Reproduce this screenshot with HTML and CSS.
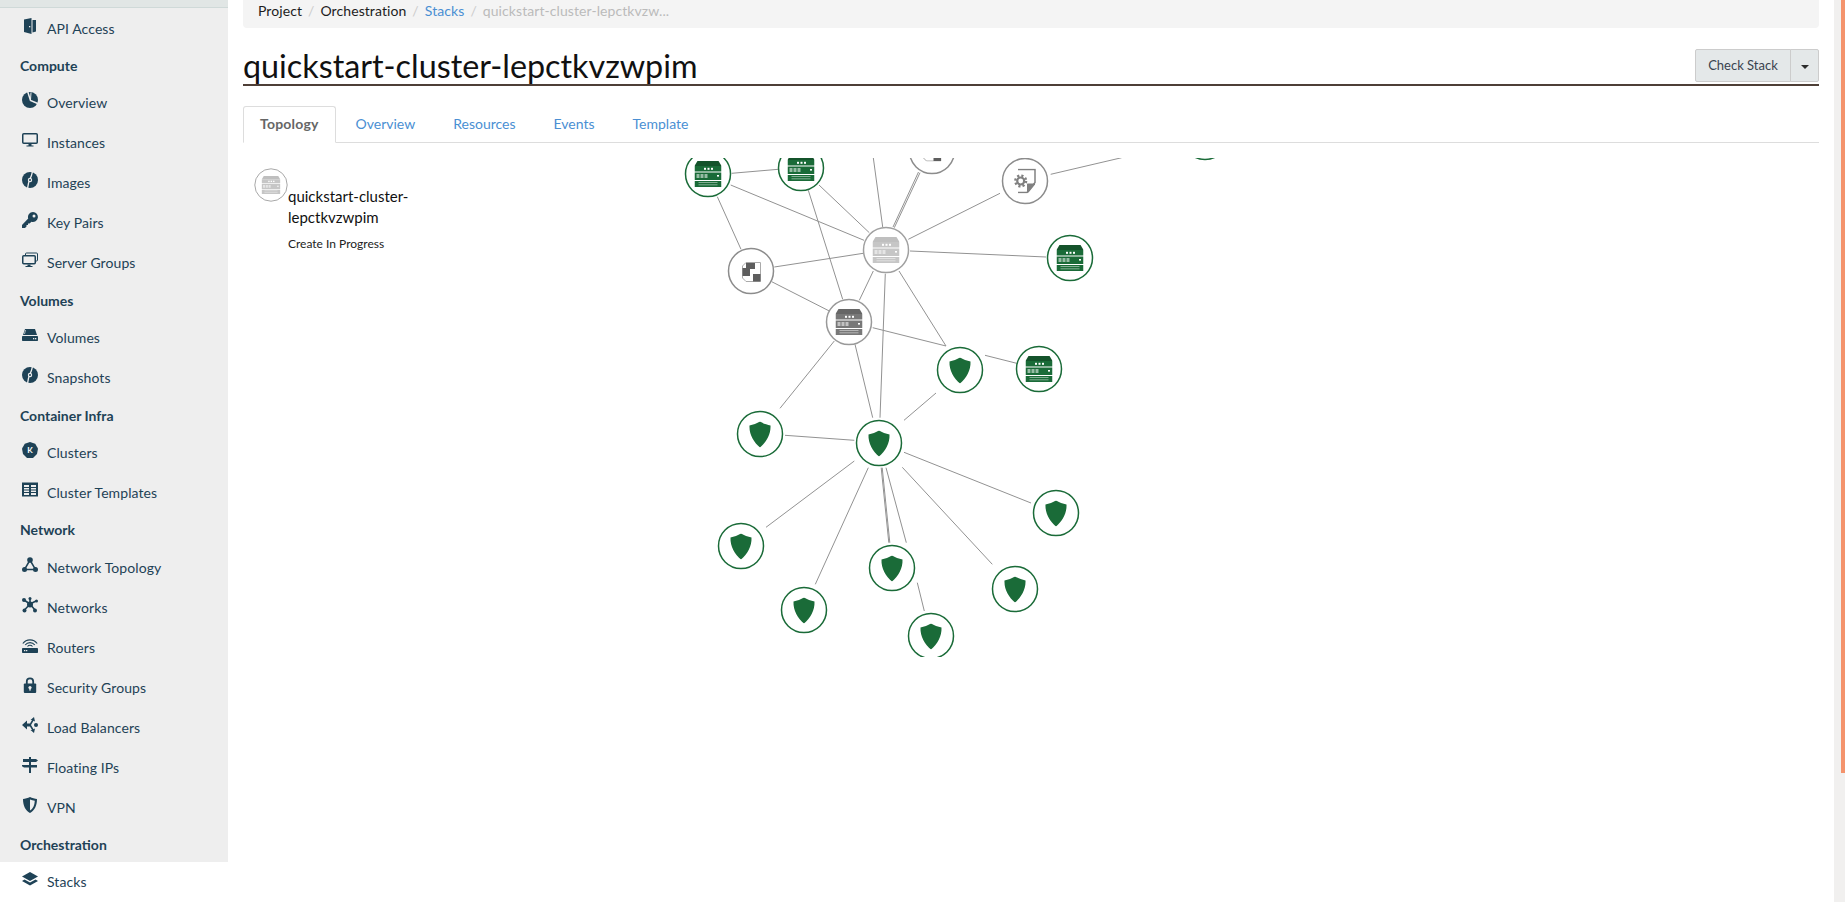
FILE: index.html

```html
<!DOCTYPE html>
<html lang="en">
<head>
    <meta charset="UTF-8">
    <meta name="viewport" content="width=device-width, initial-scale=1.0">
    <title>Stack Details</title>
    <link rel="stylesheet" href="styles.css">
</head>
<body>
<svg class="icon-defs" width="0" height="0">
    <symbol id="node-server" viewBox="0 0 27 26">
        <path d="M3 0H24L27 5H0Z" fill="currentColor"/>
        <path class="server-top" d="M3 0H24L27 5H0Z" fill="#000"/>
        <rect y="5" width="27" height="5.500" fill="currentColor"/>
        <rect y="11.500" width="27" height="7.500" fill="currentColor"/>
        <rect y="20" width="27" height="6" fill="currentColor"/>
        <rect x="9.500" y="6.800" width="2" height="2" fill="#fff"/>
        <rect x="13" y="6.800" width="2" height="2" fill="#fff"/>
        <rect x="16.500" y="6.800" width="2" height="2" fill="#fff"/>
        <rect x="22.500" y="14" width="2" height="1.600" fill="#fff"/>
        <path d="M2 13H5V17H2ZM6 13H9V17H6ZM10 13H13V17H10Z" fill="#fff" opacity="0.55"/>
        <rect x="4" y="21" width="19" height="1" fill="#fff" opacity="0.45"/>
        <rect x="4" y="23.300" width="19" height="1" fill="#fff" opacity="0.45"/>
    </symbol>
    <symbol id="node-checker" viewBox="0 0 19 20">
        <path d="M4 .5H18.500V19.500H4L.5 16V4Z" fill="#fff" stroke="#aaa"/>
        <path d="M4 1H13V7H8V14H.5V6H4Z" fill="currentColor"/>
        <path d="M11 12H18.500V19.500H11Z" fill="currentColor"/>
    </symbol>
    <symbol id="node-doc" viewBox="0 0 22 25">
        <path d="M4 1H21V14L13 24H4" fill="none" stroke="currentColor" stroke-width="1.500"/>
        <path d="M21 15V16L14.500 24H13V15Z" fill="currentColor"/>
        <circle cx="6.700" cy="12.500" r="7" fill="#fff"/>
        <circle cx="6.700" cy="12.500" r="5.400" fill="none" stroke="currentColor" stroke-width="2.400" stroke-dasharray="2.150 2.090"/>
        <circle cx="6.700" cy="12.500" r="3.500" fill="none" stroke="currentColor" stroke-width="2.200"/>
    </symbol>
    <symbol id="node-shield" viewBox="0 0 22 26">
        <path d="M11 0C14 2 18 3 21.500 4C22 13 17 21 11 26C5 21 0 13 .5 4C4 3 8 2 11 0Z" fill="currentColor"/>
    </symbol>

    <symbol id="i-door" viewBox="0 0 16 16"><path d="M2 1.500L9.500 0V16L2 14ZM10.500 2H14V13.500L10.500 14.500Z" fill="currentColor"/><rect x="7" y="8" width="1.300" height="1.300" fill="#eee"/></symbol>
    <symbol id="i-pie" viewBox="0 0 16 16"><circle cx="8" cy="8" r="8" fill="currentColor"/><path d="M5.500 -1L8.500 8.500L17 12" fill="none" stroke="#eee" stroke-width="1.500"/><path d="M9 0.500L8.500 8" fill="none" stroke="#eee"/></symbol>
    <symbol id="i-monitor" viewBox="0 0 16 16"><rect x=".75" y="1.750" width="14.500" height="9.500" rx="1" fill="none" stroke="currentColor" stroke-width="1.500"/><path d="M6.500 12H9.500V13.500H11.500V14.500H4.500V13.500H6.500Z" fill="currentColor"/></symbol>
    <symbol id="i-disc" viewBox="0 0 16 16"><circle cx="8" cy="8" r="8" fill="currentColor"/><path d="M10.500 -1C10 3 9 5 8 7C6.500 10 6 13 5.500 17" fill="none" stroke="#eee" stroke-width="1.300"/><circle cx="8" cy="8" r="2.200" fill="#eee"/><circle cx="8" cy="8" r="1" fill="currentColor"/></symbol>
    <symbol id="i-key" viewBox="0 0 16 16"><path d="M11 0A5 5 0 1 1 9.500 9.800L7.500 11.500H6V13H4.500V14.500L3 16H0V13L6.200 6.500A5 5 0 0 1 11 0Z" fill="currentColor"/><circle cx="12" cy="4" r="1.500" fill="#eee"/></symbol>
    <symbol id="i-monitors" viewBox="0 0 16 16"><rect x="3.500" y="1" width="12" height="8" rx="1" fill="none" stroke="currentColor"/><rect x=".75" y="3.750" width="12.500" height="8" rx="1" fill="#eee" stroke="currentColor" stroke-width="1.500"/><path d="M5.500 12.500H8.500V14H10.500V15H3.500V14H5.500Z" fill="currentColor"/></symbol>
    <symbol id="i-hdd" viewBox="0 0 16 16"><path d="M3 2H13L15 8H1Z" fill="currentColor"/><path d="M3.500 3L2.500 7" stroke="#eee" stroke-width=".7"/><rect y="9" width="16" height="5" rx=".7" fill="currentColor"/><rect x="11" y="11" width="1.300" height="1.300" fill="#eee"/><rect x="13" y="11" width="1.300" height="1.300" fill="#eee"/></symbol>
    <symbol id="i-k8s" viewBox="0 0 16 16"><path d="M8 0L13.200 1.800L16 6.500L15 12L11 16H5L1 12L0 6.500L2.800 1.800Z" fill="currentColor"/></symbol>
    <symbol id="i-book" viewBox="0 0 16 16"><rect y="0.500" width="16" height="14" fill="currentColor"/><path d="M2 3H7V13H2ZM9 3H14V13H9Z" fill="#eee"/><path d="M2 5.500H7M9 5.500H14M2 8H7M9 8H14M2 10.500H7M9 10.500H14" stroke="currentColor"/></symbol>
    <symbol id="i-topo" viewBox="0 0 16 16"><path d="M8 3L2.500 12.500H13.500Z" fill="none" stroke="currentColor" stroke-width="1.500"/><circle cx="8" cy="3" r="2.800" fill="currentColor"/><circle cx="2.500" cy="12.500" r="2.500" fill="currentColor"/><circle cx="13.500" cy="12.500" r="2.500" fill="currentColor"/></symbol>
    <symbol id="i-net" viewBox="0 0 16 16"><path d="M8 7L8 1M8 7L2 3M8 7L14 4M8 7L2.500 13M8 7L13 13" stroke="currentColor" stroke-width="1.600"/><circle cx="8" cy="7.500" r="3" fill="currentColor"/><circle cx="8" cy="1.500" r="1.500" fill="currentColor"/><circle cx="2" cy="3" r="2" fill="currentColor"/><circle cx="14.500" cy="4" r="1.500" fill="currentColor"/><circle cx="2.500" cy="13.500" r="2" fill="currentColor"/><circle cx="13" cy="13.500" r="2" fill="currentColor"/></symbol>
    <symbol id="i-router" viewBox="0 0 16 16"><path d="M.8 6.500A9 9 0 0 1 15.200 6.500M3.200 8A6 6 0 0 1 12.800 8M5.500 9.500A3.200 3.200 0 0 1 10.500 9.500" fill="none" stroke="currentColor" stroke-width="1.100"/><rect y="11" width="16" height="5" rx=".8" fill="currentColor"/><rect x="2" y="13" width="1.300" height="1.200" fill="#eee"/><rect x="4" y="13" width="1.300" height="1.200" fill="#eee"/></symbol>
    <symbol id="i-lock" viewBox="0 0 16 16"><path d="M4.800 7V4.500A3.200 3.200 0 0 1 11.200 4.500V7" fill="none" stroke="currentColor" stroke-width="1.800"/><rect x="1.800" y="6.500" width="12.400" height="9.500" rx="1" fill="currentColor"/><circle cx="8" cy="10.500" r="1.600" fill="#eee"/><rect x="7.300" y="11" width="1.400" height="2.600" fill="#eee"/></symbol>
    <symbol id="i-lb" viewBox="0 0 16 16"><path d="M0 8L5 3.500V6.500H8L10 3H8.500L12 0L13 4.500L11.500 3.800L9 8L11.500 12.200L13 11.500L12 16L8.500 13H10L8 9.500H5V12.500Z" fill="currentColor"/><circle cx="14" cy="8" r="2" fill="currentColor"/></symbol>
    <symbol id="i-sign" viewBox="0 0 16 16"><rect x="7" y="0" width="2" height="16" fill="currentColor"/><path d="M1 2H14L16 3.500L14 5H1ZM0 8H15V10.500H2L0 9.200Z" fill="currentColor"/></symbol>
    <symbol id="i-vpn" viewBox="0 0 16 16"><path d="M8 0C10 1 13 1.800 15 2C15 9 12.500 13.500 8 16C3.500 13.500 1 9 1 2C3 1.800 6 1 8 0Z" fill="currentColor"/><path d="M8 2.500C9.500 3.200 11.300 3.600 12.800 3.800C12.600 8.500 11 11.800 8 13.500Z" fill="#eee"/></symbol>
    <symbol id="i-layers" viewBox="0 0 16 16"><path d="M8 1L16 5.500L8 10L0 5.500Z" fill="currentColor"/><path d="M2.500 8.500L8 11.500L13.500 8.500L16 10L8 14.500L0 10Z" fill="currentColor"/></symbol>
</svg>

<div class="app">
    <nav class="sidebar">
        <div class="sidebar-top"></div>
        <a class="nav-item"><svg class="nav-icon"><use href="#i-door"/></svg>API Access</a>
        <div class="nav-head">Compute</div>
        <a class="nav-item"><svg class="nav-icon"><use href="#i-pie"/></svg>Overview</a>
        <a class="nav-item"><svg class="nav-icon"><use href="#i-monitor"/></svg>Instances</a>
        <a class="nav-item"><svg class="nav-icon"><use href="#i-disc"/></svg>Images</a>
        <a class="nav-item"><svg class="nav-icon"><use href="#i-key"/></svg>Key Pairs</a>
        <a class="nav-item"><svg class="nav-icon"><use href="#i-monitors"/></svg>Server Groups</a>
        <div class="nav-head">Volumes</div>
        <a class="nav-item"><svg class="nav-icon"><use href="#i-hdd"/></svg>Volumes</a>
        <a class="nav-item"><svg class="nav-icon"><use href="#i-disc"/></svg>Snapshots</a>
        <div class="nav-head">Container Infra</div>
        <a class="nav-item"><svg class="nav-icon" viewBox="0 0 16 16"><use href="#i-k8s"/><text x="8" y="10.800" class="k-label">K</text></svg>Clusters</a>
        <a class="nav-item"><svg class="nav-icon"><use href="#i-book"/></svg>Cluster Templates</a>
        <div class="nav-head">Network</div>
        <a class="nav-item"><svg class="nav-icon"><use href="#i-topo"/></svg>Network Topology</a>
        <a class="nav-item"><svg class="nav-icon"><use href="#i-net"/></svg>Networks</a>
        <a class="nav-item"><svg class="nav-icon"><use href="#i-router"/></svg>Routers</a>
        <a class="nav-item"><svg class="nav-icon"><use href="#i-lock"/></svg>Security Groups</a>
        <a class="nav-item"><svg class="nav-icon"><use href="#i-lb"/></svg>Load Balancers</a>
        <a class="nav-item"><svg class="nav-icon"><use href="#i-sign"/></svg>Floating IPs</a>
        <a class="nav-item"><svg class="nav-icon"><use href="#i-vpn"/></svg>VPN</a>
        <div class="nav-head">Orchestration</div>
        <a class="nav-item active"><svg class="nav-icon"><use href="#i-layers"/></svg>Stacks</a>
    </nav>

    <main class="content">
        <ol class="breadcrumb">
            <li>Project</li>
            <li>Orchestration</li>
            <li><a>Stacks</a></li>
            <li class="current">quickstart-cluster-lepctkvzw...</li>
        </ol>

        <div class="page-header">
            <h1>quickstart-cluster-lepctkvzwpim</h1>
            <div class="btn-group">
                <button class="btn">Check Stack</button>
                <button class="btn btn-caret"><span class="caret"></span></button>
            </div>
        </div>

        <ul class="tabs">
            <li class="tab active">Topology</li>
            <li class="tab">Overview</li>
            <li class="tab">Resources</li>
            <li class="tab">Events</li>
            <li class="tab">Template</li>
        </ul>

        <section class="topology">
            <div class="stack-info">
                <svg class="stack-icon" viewBox="0 0 34 34">
                    <circle cx="17" cy="17" r="16.200" class="stack-ring"/>
                    <use href="#node-server" x="7.500" y="8" width="19" height="18" class="c-light"/>
                </svg>
                <div class="stack-name">quickstart-cluster-<br>lepctkvzwpim</div>
                <div class="stack-status">Create In Progress</div>
            </div>

            <svg class="graph" viewBox="243 157 1576 499">
                <g class="links">
                    <line x1="731.7" y1="172.3" x2="778.3" y2="168.3"/>
                    <line x1="730.7" y1="184" x2="864" y2="239.300"/>
                    <line x1="717.3" y1="195.7" x2="741" y2="248.300"/>
                    <line x1="819" y1="184" x2="869.300" y2="231.700"/>
                    <line x1="808.300" y1="189.300" x2="842.700" y2="298.300"/>
                    <line x1="873.300" y1="156.700" x2="882.700" y2="226"/>
                    <line x1="920" y1="171.700" x2="894.300" y2="226.700"/>
                    <line x1="918.500" y1="171" x2="893" y2="226"/>
                    <line x1="908.300" y1="238.300" x2="1000" y2="192.300"/>
                    <line x1="910" y1="250" x2="1046" y2="256"/>
                    <line x1="774.300" y1="266" x2="863.300" y2="252.300"/>
                    <line x1="771.700" y1="280.700" x2="829.300" y2="310"/>
                    <line x1="873.300" y1="270" x2="859.300" y2="299.300"/>
                    <line x1="885.300" y1="272.700" x2="880" y2="416.700"/>
                    <line x1="899" y1="270" x2="946" y2="345"/>
                    <line x1="872.700" y1="326.700" x2="946" y2="345"/>
                    <line x1="855" y1="343.300" x2="872.700" y2="416.700"/>
                    <line x1="834.300" y1="340" x2="780" y2="407.300"/>
                    <line x1="1050.700" y1="173.300" x2="1121.700" y2="156.700"/>
                    <line x1="985" y1="354.300" x2="1016.700" y2="362.300"/>
                    <line x1="904" y1="419.300" x2="936" y2="392"/>
                    <line x1="785" y1="434.300" x2="854.300" y2="439.300"/>
                    <line x1="904" y1="451.300" x2="1031" y2="502"/>
                    <line x1="854.300" y1="460" x2="766" y2="526.300"/>
                    <line x1="868.300" y1="466.700" x2="815.300" y2="583.300"/>
                    <line x1="881.200" y1="466.700" x2="888.800" y2="541.700"/>
                    <line x1="882.200" y1="466.700" x2="889.800" y2="541.700"/>
                    <line x1="886" y1="466.700" x2="906.300" y2="541.700"/>
                    <line x1="902.300" y1="466.300" x2="992.300" y2="563.300"/>
                    <line x1="917.300" y1="581.700" x2="924.300" y2="610"/>
                </g>

                <g class="node ok"><circle cx="708" cy="173" r="22.500"/><use href="#node-server" x="694.500" y="160" width="27" height="26"/></g>
                <g class="node ok"><circle cx="801" cy="167" r="22.500"/><use href="#node-server" x="787.500" y="154" width="27" height="26"/></g>
                <g class="node ok"><circle cx="1205" cy="136" r="22.500"/></g>
                <g class="node ok"><circle cx="1070" cy="257" r="22.500"/><use href="#node-server" x="1056.500" y="244" width="27" height="26"/></g>
                <g class="node ok"><circle cx="1039" cy="368" r="22.500"/><use href="#node-server" x="1025.500" y="355" width="27" height="26"/></g>

                <g class="node idle"><circle cx="932" cy="150" r="22.500"/><use href="#node-checker" x="922.500" y="140.500" width="19" height="20"/></g>
                <g class="node idle"><circle cx="751" cy="270" r="22.500"/><use href="#node-checker" x="742" y="261" width="19" height="20"/></g>
                <g class="node doc"><circle cx="1025" cy="180" r="22.500"/><use href="#node-doc" x="1014" y="167.500" width="22" height="25"/></g>
                <g class="node light"><circle cx="886" cy="249" r="22.500"/><use href="#node-server" x="872.500" y="236" width="27" height="26"/></g>
                <g class="node dark"><circle cx="849" cy="321" r="22.500"/><use href="#node-server" x="835.500" y="308" width="27" height="26"/></g>

                <g class="node ok"><circle cx="960" cy="369" r="22.500"/><use href="#node-shield" x="949" y="356.500" width="22" height="26"/></g>
                <g class="node ok"><circle cx="760" cy="433" r="22.500"/><use href="#node-shield" x="749" y="420.500" width="22" height="26"/></g>
                <g class="node ok"><circle cx="879" cy="442" r="22.500"/><use href="#node-shield" x="868" y="429.500" width="22" height="26"/></g>
                <g class="node ok"><circle cx="1056" cy="512" r="22.500"/><use href="#node-shield" x="1045" y="499.500" width="22" height="26"/></g>
                <g class="node ok"><circle cx="741" cy="545" r="22.500"/><use href="#node-shield" x="730" y="532.500" width="22" height="26"/></g>
                <g class="node ok"><circle cx="892" cy="567" r="22.500"/><use href="#node-shield" x="881" y="554.500" width="22" height="26"/></g>
                <g class="node ok"><circle cx="1015" cy="588" r="22.500"/><use href="#node-shield" x="1004" y="575.500" width="22" height="26"/></g>
                <g class="node ok"><circle cx="804" cy="609" r="22.500"/><use href="#node-shield" x="793" y="596.500" width="22" height="26"/></g>
                <g class="node ok"><circle cx="931" cy="635" r="22.500"/><use href="#node-shield" x="920" y="622.500" width="22" height="26"/></g>
            </svg>
        </section>
    </main>

    <div class="scrollbar"><div class="scrollbar-thumb"></div></div>
</div>
</body>
</html>
```

FILE: styles.css

```css
html, body {
    height: 100%;
    margin: 0;
    overflow: hidden;
}
body {
    font-family: Lato, "Liberation Sans", sans-serif;
    font-size: 14px;
    background-color: white;
    color: #1d1d1d;
}
.icon-defs {
    position: absolute;
}
.app {
    display: flex;
    height: 902px;
}

/* sidebar */
.sidebar {
    width: 228px;
    flex-shrink: 0;
    background: #eeeeee;
    color: #1e4256;
    height: 902px;
}
.sidebar-top {
    height: 7px;
    background: #e1e6e5;
    border-bottom: 1px solid #cfd9d8;
}
.nav-item {
    display: flex;
    align-items: center;
    height: 40px;
    padding-left: 22px;
    letter-spacing: 0.08px;
}
.nav-icon {
    width: 16px;
    height: 16px;
    margin-right: 9px;
    margin-top: -5px;
    flex-shrink: 0;
}
.nav-head {
    height: 34.800px;
    line-height: 36px;
    padding-left: 20px;
    font-weight: bold;
}
.nav-item.active {
    background: white;
    border-bottom: 1px solid #e8e8e8;
}
.k-label {
    font-family: Lato, sans-serif;
    font-size: 8px;
    font-weight: bold;
    fill: white;
    text-anchor: middle;
}

/* main column */
.content {
    flex: 1;
    padding: 0 15px;
    min-width: 0;
}
.breadcrumb {
    display: flex;
    list-style: none;
    margin: 0;
    padding: 0 15px;
    height: 28px;
    line-height: 22px;
    background: #f4f4f4;
    border-radius: 0 0 4px 4px;
    letter-spacing: 0.08px;
}
.breadcrumb li + li::before {
    content: "/";
    color: #ccc;
    padding: 0 6px;
}
.breadcrumb a {
    color: #4a8fd3;
}
.breadcrumb .current {
    color: #bbb;
}

.page-header {
    display: flex;
    justify-content: space-between;
    align-items: flex-start;
    height: 56px;
    border-bottom: 2px solid #4e3f37;
}
.page-header h1 {
    margin: 0;
    font-size: 32.300px;
    font-weight: normal;
    line-height: 40px;
    padding-top: 18px;
    color: #111;
}
.btn-group {
    display: flex;
    margin-top: 21px;
}
.btn {
    font-family: inherit;
    font-size: 13px;
    color: #39434f;
    height: 33px;
    width: 96px;
    padding: 0 0 2px;
    background: #e4e8e9;
    border: 1px solid #ccc;
    border-radius: 2px 0 0 2px;
}
.btn-caret {
    width: 29px;
    margin-left: -1px;
    padding: 0;
    border-radius: 0 2px 2px 0;
}
.caret {
    display: inline-block;
    border-top: 4px solid #2c2c2c;
    border-left: 4px solid transparent;
    border-right: 4px solid transparent;
    vertical-align: middle;
}

.tabs {
    display: flex;
    list-style: none;
    margin: 20px 0 0;
    padding: 0;
    height: 36px;
    border-bottom: 1px solid #dddddd;
}
.tab {
    padding: 0 17px;
    line-height: 34px;
    height: 36px;
    color: #4a8fd3;
    box-sizing: border-box;
    border: 1px solid transparent;
    margin-right: 2px;
}
.tab.active {
    padding: 0 16px;
    color: #666;
    font-weight: bold;
    letter-spacing: 0.2px;
    background: white;
    border-color: #dddddd #dddddd white;
    border-radius: 3px 3px 0 0;
    height: 37px;
}

/* topology canvas */
.topology {
    position: relative;
    margin-top: 15px;
}
.graph {
    display: block;
    width: 1576px;
    height: 499px;
}
.links line {
    stroke: #929292;
    stroke-width: 1;
}
.server-top {
    opacity: var(--top-shade, 0.22);
}
.node circle {
    fill: white;
    stroke-width: 1.500;
}
.node.ok { color: #1a6b38; }
.node.ok circle { stroke: #1a6b38; }
.node.idle { color: #5e5e5e; }
.node.idle circle { stroke: #8c8c8c; }
.node.doc { color: #808080; }
.node.doc circle { stroke: #8c8c8c; }
.node.light { color: #c6c6c6; --top-shade: 0.03; }
.node.light circle { stroke: #a0a0a0; }
.node.dark { color: #787878; --top-shade: 0.15; }
.node.dark circle { stroke: #999; }
.c-light { color: #c6c6c6; --top-shade: 0.03; }

.stack-info {
    position: absolute;
    left: 11px;
    top: 10px;
    width: 160px;
}
.stack-icon {
    display: block;
    width: 34px;
    height: 34px;
}
.stack-ring {
    fill: white;
    stroke: #a8a8a8;
}
.stack-name {
    margin: -16.500px 0 0 34px;
    font-size: 15px;
    line-height: 21px;
    color: #111;
}
.stack-status {
    margin: 7px 0 0 34px;
    font-size: 12px;
    line-height: 17px;
    color: #222;
}

.scrollbar {
    width: 11px;
    flex-shrink: 0;
    background: #f1f0ef;
    display: flex;
    justify-content: flex-end;
}
.scrollbar-thumb {
    width: 4px;
    height: 773px;
    background: #f4936c;
}
```
